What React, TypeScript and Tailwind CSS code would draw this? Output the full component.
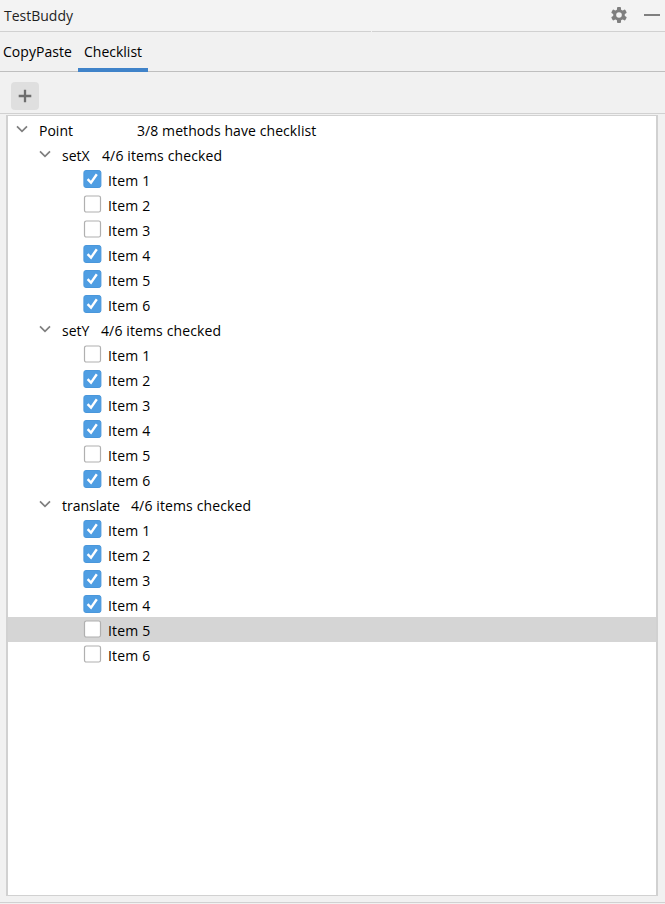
import React from 'react';

type Method = { name: string; gap: string; items: boolean[]; selected?: number };

const methods: Method[] = [
  { name: 'setX', gap: 'w-10', items: [true, false, false, true, true, true] },
  { name: 'setY', gap: 'w-[39px]', items: [false, true, true, true, false, true] },
  { name: 'translate', gap: 'w-[69px]', items: [true, true, true, true, false, false], selected: 4 },
];

function Chevron() {
  return (
    <svg width="12" height="8" viewBox="0 0 12 8" fill="none" className="-mt-px shrink-0">
      <path d="M1 1.4 L6 6.4 L11 1.4" stroke="#7f7f7f" strokeWidth="1.7" />
    </svg>
  );
}

function Box({ checked }: { checked: boolean }) {
  return (
    <svg width="19" height="18" viewBox="0 0 19 18" fill="none" className="-mt-px shrink-0">
      {checked ? (
        <>
          <rect x="0.9" y="0.5" width="17" height="17" rx="2" fill="#4f9ee3" stroke="#4a97db" />
          <path d="M4.6 9.2 L8 12.6 L13.8 4.2" stroke="#fff" strokeWidth="2.4" />
        </>
      ) : (
        <rect x="1.5" y="1" width="16" height="16" rx="1.8" fill="#fff" stroke="#b0b0b0" strokeWidth="1.2" />
      )}
    </svg>
  );
}

export default function App() {
  return (
    <div className="flex h-[904px] w-[665px] flex-col bg-[#f1f1f1] font-['Open_Sans','Noto_Sans',sans-serif] text-[14px] leading-[25px] whitespace-nowrap text-black">
      <header className="flex h-[31px] shrink-0 items-center bg-[#f3f3f3] pl-1">
        <span className="text-[#1f1f1f]">TestBuddy</span>
        <svg width="16" height="16" viewBox="0 0 16 16" className="-mt-px ml-auto">
          <g fill="#7f7f7f">
            <circle cx="8" cy="8" r="5.8" />
            <rect x="6" y="0" width="4" height="16" rx="0.9" />
            <rect x="6" y="0" width="4" height="16" rx="0.9" transform="rotate(60 8 8)" />
            <rect x="6" y="0" width="4" height="16" rx="0.9" transform="rotate(120 8 8)" />
          </g>
          <circle cx="8" cy="8" r="2.8" fill="#f3f3f3" />
        </svg>
        <span className="-mt-px mr-[5px] ml-[17px] h-0.5 w-4 bg-[#7f7f7f]" />
      </header>
      <div className="flex h-px shrink-0 gap-px">
        <span className="w-[371px] bg-[#d1d1d1]" />
        <span className="flex-1 bg-[#d1d1d1]" />
      </div>
      <nav className="flex h-10 shrink-0 border-b border-[#bfbfbf]">
        <div className="w-[78px] pt-[7px] pl-[3px] tracking-[0.03px]">CopyPaste</div>
        <div className="-mb-px w-[70px] border-b-4 border-[#4083c9] pt-[7px] pl-1.5">Checklist</div>
      </nav>
      <div className="flex h-[42px] shrink-0 items-center border-b border-[#d1d1d1] pt-[7px] pl-[11px]">
        <button className="flex size-7 items-center justify-center rounded-[4px] bg-[#dfdfdf]">
          <svg width="14" height="14" viewBox="0 0 14 14"><path d="M7 .7V13.3M.7 7H13.3" stroke="#6e6e6e" strokeWidth="2.3" /></svg>
        </button>
      </div>
      <main className="mt-px mr-[7px] ml-1.5 h-[781px] shrink-0 border-x-2 border-y border-[#d1d1d1] bg-white pt-px">
        <div className="flex h-[25px] items-center pl-2">
          <Chevron />
          <span className="ml-[11px] w-[98px] pt-0.5">Point</span>
          <span className="pt-0.5 tracking-[0.08px]">3/8 methods have checklist</span>
        </div>
        {methods.map((m) => (
          <section key={m.name}>
            <div className="flex h-[25px] items-center pl-[31px]">
              <Chevron />
              <span className={`ml-[11px] pt-0.5 ${m.gap}`}>{m.name}</span>
              <span className="pt-0.5 tracking-[0.12px]">4/6 items checked</span>
            </div>
            {m.items.map((checked, i) => (
              <div key={i} className={`flex h-[25px] items-center pl-[75px] ${m.selected === i ? 'bg-[#d5d5d5]' : ''}`}>
                <Box checked={checked} />
                <span className="ml-1.5 pt-0.5 tracking-[0.2px]">Item {i + 1}</span>
              </div>
            ))}
          </section>
        ))}
      </main>
      <div className="mt-1.5 h-px shrink-0 bg-[#d1d1d1]" />
    </div>
  );
}
